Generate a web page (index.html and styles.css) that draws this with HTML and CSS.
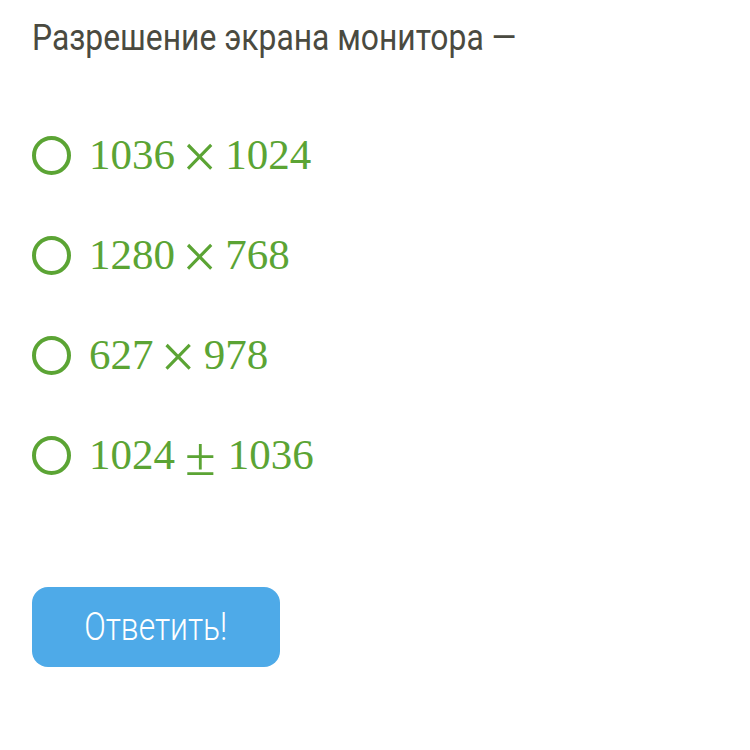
FILE: index.html
```html
<!DOCTYPE html>
<html lang="ru">
<head>
    <meta charset="UTF-8">
    <meta name="viewport" content="width=device-width, initial-scale=1.0">
    <title>Вопрос</title>
    <link rel="stylesheet" href="styles.css">
</head>
<body>
    <div class="quiz">
        <h1 class="question">Разрешение экрана монитора —</h1>
        <ul class="options">
            <li class="option"><span class="radio"></span><span class="answer">1036<span class="op">×</span>1024</span></li>
            <li class="option"><span class="radio"></span><span class="answer">1280<span class="op">×</span>768</span></li>
            <li class="option"><span class="radio"></span><span class="answer">627<span class="op">×</span>978</span></li>
            <li class="option"><span class="radio"></span><span class="answer">1024<span class="op pm">±</span>1036</span></li>
        </ul>
        <button class="submit"><span class="label">Ответить!</span></button>
    </div>
</body>
</html>
```

FILE: styles.css
```css
body {
    margin: 0;
    background: #fff;
}
.quiz {
    padding: 16px 32px;
}
.question {
    margin: 0;
    font-family: "Roboto", sans-serif;
    font-weight: 400;
    font-size: 37px;
    line-height: 44px;
    color: #4a4a40;
    transform: scaleX(0.86);
    transform-origin: left center;
    white-space: nowrap;
}
.options {
    list-style: none;
    margin: 71px 0 0 0;
    padding: 0;
    display: flex;
    flex-direction: column;
    gap: 52px;
}
.option {
    display: flex;
    align-items: center;
    gap: 18px;
    height: 48px;
}
/* radio circle */
.radio {
    width: 31px;
    height: 31px;
    border: 4px solid #5ba434;
    border-radius: 50%;
    flex-shrink: 0;
}
.answer {
    font-family: "Liberation Serif", serif;
    font-size: 43px;
    line-height: 48px;
    color: #5ba434;
    white-space: nowrap;
}
.op {
    font-size: 1.45em;
    line-height: 0;
    margin: 0 8px 0 7px;
    vertical-align: -9px;
}
.pm {
    font-size: 1.3em;
    margin: 0 12px 0 10px;
    vertical-align: -6px;
}
.submit {
    margin-top: 108px;
    width: 248px;
    height: 80px;
    border: none;
    border-radius: 16px;
    background-color: #4eaae8;
    color: #fff;
    font-family: "Roboto", sans-serif;
    font-weight: 300;
    font-size: 39px;
    cursor: pointer;
    padding: 0;
}
.label {
    display: inline-block;
    transform: scaleX(0.815);
}
```
